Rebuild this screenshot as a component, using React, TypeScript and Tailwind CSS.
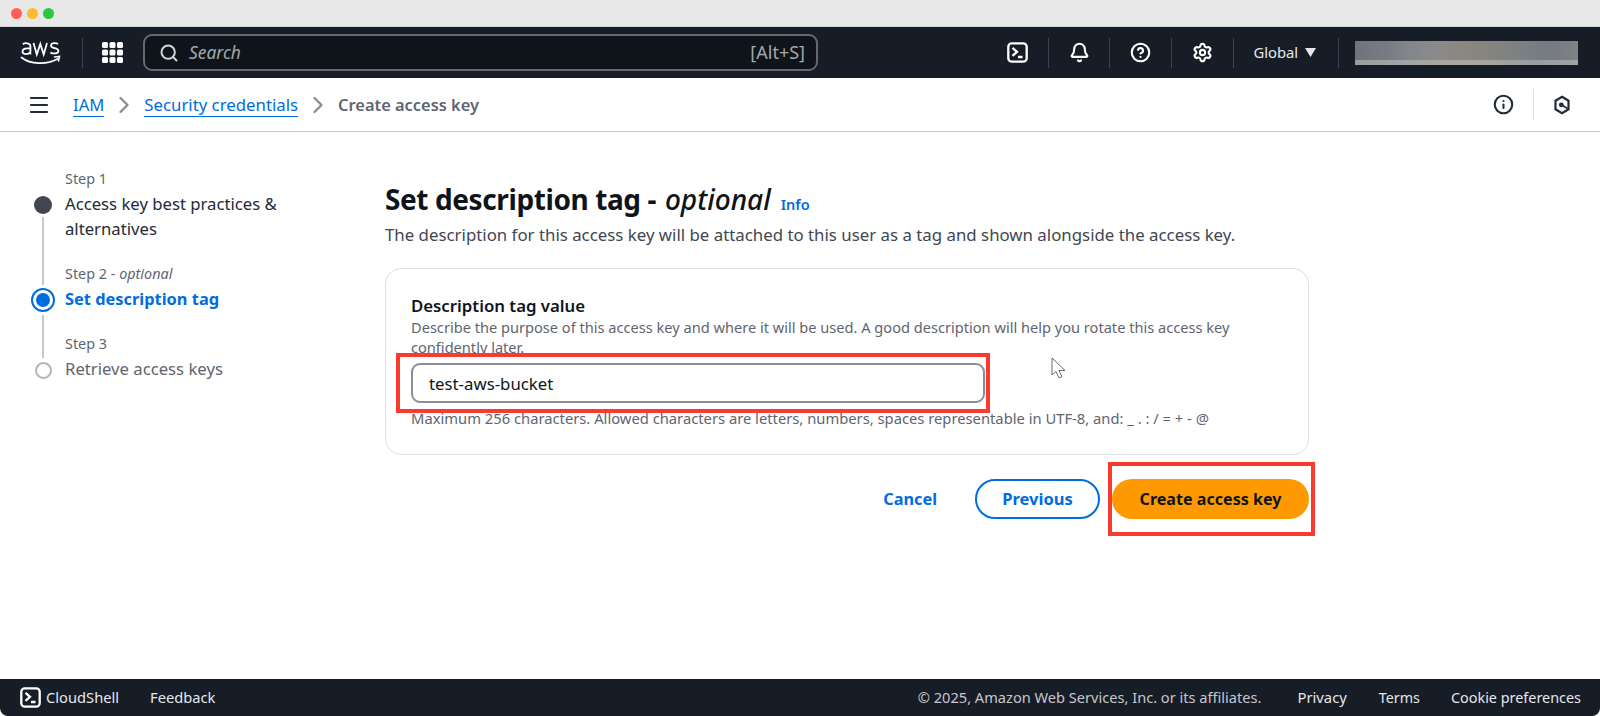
import { Bell, ChevronRight, CircleHelp, Info, Menu, Search, Settings } from 'lucide-react'

function Divider() {
  return <div className="h-[30px] w-px bg-[#3d4450]" />
}

function AwsLogo() {
  return (
    <svg width="42" height="28" viewBox="0 0 42 28" fill="none" aria-label="aws">
      <path d="M2.800 5.200c2-1.400 7.600-1.700 7.600 2v8.300M10.400 9.500c-3.500-.4-7.900 0-7.900 3.100 0 3.200 5.500 3.200 7.900.6" stroke="#fff" strokeWidth="1.800" />
      <path d="M13.500 4l3.300 11.500L20.300 5l3.400 10.500L27 4" stroke="#fff" strokeWidth="1.800" />
      <path d="M38 5c-2-1.400-7-1.500-7 1.700 0 3.200 7.400 1.500 7.400 5 0 3.300-5.500 3.300-8 1.700" stroke="#fff" strokeWidth="1.800" />
      <path d="M1.500 18.500c9 7 25 7.500 36 1.500" stroke="#fff" strokeWidth="1.800" strokeLinecap="round" />
      <path d="M34.500 18l5-.5-1 4.500" stroke="#fff" strokeWidth="1.600" strokeLinecap="round" />
    </svg>
  )
}

function AppsGrid() {
  const offsets = [0, 7.5, 15]
  return (
    <svg className="ml-[19px]" width="21" height="21" viewBox="0 0 21 21" fill="#fff" aria-hidden="true">
      {offsets.map((y) => offsets.map((x) => <rect key={`${x}-${y}`} x={x} y={y} width="6" height="6" rx="1.500" />))}
    </svg>
  )
}

function TerminalIcon() {
  return (
    <svg width="21" height="21" viewBox="0 0 21 21" fill="none" stroke="#fff" strokeWidth="2.300" aria-hidden="true">
      <rect x="1.300" y="1.300" width="18.400" height="18.400" rx="3.500" />
      <path d="M5.500 5.800l4.500 4-4.500 4M11 15h4.500" />
    </svg>
  )
}

function TopNav() {
  return (
    <header className="flex h-[51px] items-center bg-[#161d26] pl-[20px] text-white">
      <AwsLogo />
      <div className="ml-[20px] h-[30px] w-px bg-[#3d4450]" />
      <AppsGrid />
      <div className="ml-[20px] flex h-[37px] w-[675px] items-center rounded-[9px] border-2 border-[#656871] bg-[#0f141a] pl-[14px] pr-[11px]">
        <Search className="h-[20px] w-[20px] text-[#d1d5db]" strokeWidth={2.4} aria-hidden="true" />
        <span className="ml-[10px] text-[17.400px] italic text-[#a4a7ae]">Search</span>
        <span className="ml-auto text-[18px] text-[#a4a7ae]">[Alt+S]</span>
      </div>
      <div className="ml-[189px] flex items-center gap-[19.800px]">
        <TerminalIcon />
        <Divider />
        <Bell className="h-[21px] w-[21px]" strokeWidth={2.4} aria-hidden="true" />
        <Divider />
        <CircleHelp className="h-[21px] w-[21px]" strokeWidth={2.4} aria-hidden="true" />
        <Divider />
        <Settings className="h-[21px] w-[21px]" strokeWidth={2.4} aria-hidden="true" />
        <Divider />
        <span className="flex items-center gap-[7px] text-[14.800px] text-[#e5e7eb]">
          Global
          <svg width="11" height="9" viewBox="0 0 11 9" fill="#e5e7eb" aria-hidden="true">
            <path d="M0 0h11L5.500 9z" />
          </svg>
        </span>
        <div className="ml-[2px] h-[30px] w-px bg-[#3d4450]" />
      </div>
      <div className="ml-[16px] flex h-[24px] w-[223px] flex-col">
        <div className="flex-1 bg-[linear-gradient(90deg,#6f747c,#757a83,#83868a,#8b8b8a,#8b867e,#84847f,#7b8083,#757a84,#7f8385)]" />
        <div className="h-[5px] bg-[linear-gradient(90deg,#9a9ca0,#a3a4a6,#a9a79f,#a5a5a0,#999da0,#a0a3a6)]" />
      </div>
    </header>
  )
}

function Breadcrumbs() {
  return (
    <div className="flex h-[54px] items-center border-b border-[#c6c6cd] bg-white pl-[27px] pr-[28px]">
      <Menu className="h-[24px] w-[24px] text-[#232b37]" strokeWidth={2.2} aria-hidden="true" />
      <a className="ml-[22px] mt-[2px] border-b border-[#006ce0] text-[16.600px] leading-[22px] text-[#006ce0]">IAM</a>
      <ChevronRight className="mx-[6px] h-[28px] w-[28px] text-[#8c8c94]" strokeWidth={2} aria-hidden="true" />
      <a className="mt-[2px] border-b border-[#006ce0] text-[16.800px] leading-[22px] text-[#006ce0]">Security credentials</a>
      <ChevronRight className="mx-[6px] h-[28px] w-[28px] text-[#8c8c94]" strokeWidth={2} aria-hidden="true" />
      <span className="mt-[2px] text-[16.400px] font-semibold text-[#5f6570]">Create access key</span>
      <div className="ml-auto flex items-center gap-[18.500px]">
        <Info className="h-[21px] w-[21px] text-[#232b37]" strokeWidth={2.4} aria-hidden="true" />
        <div className="h-[31px] w-px bg-[#dedee3]" />
        <svg width="20" height="20" viewBox="0 0 20 20" fill="none" stroke="#232b37" strokeWidth="2.200" aria-hidden="true">
          <path d="M10 1.800l6.500 3.900v8.600L10 18.200l-6.500-3.900V5.700z" />
          <circle cx="9.300" cy="9.800" r="2.400" fill="#232b37" stroke="none" />
          <path d="M10 10.300l5.500 3.200" strokeWidth="1.800" />
        </svg>
      </div>
    </div>
  )
}

function Steps() {
  return (
    <nav className="w-[385px] shrink-0 pl-[33px] pt-[34px]">
      <div className="flex h-[95px] gap-[12px]">
        <div className="flex w-[20px] flex-col items-center pt-[30px]">
          <div className="h-[18px] w-[18px] shrink-0 rounded-full bg-[#424650]" />
          <div className="mt-[3px] h-[68px] w-[2px] shrink-0 bg-[#c6c6cd]" />
        </div>
        <div>
          <p className="text-[14.400px] leading-[25px] text-[#5f6570]">Step 1</p>
          <p className="w-[250px] text-[16.700px] leading-[25px] text-[#232b37]">Access key best practices &amp; alternatives</p>
        </div>
      </div>
      <div className="flex h-[70px] gap-[12px]">
        <div className="flex w-[20px] flex-col items-center pt-[27px]">
          <div className="flex h-[24px] w-[24px] shrink-0 items-center justify-center rounded-full border-2 border-[#006ce0]">
            <div className="h-[14px] w-[14px] rounded-full bg-[#006ce0]" />
          </div>
          <div className="mt-[3px] h-[43px] w-[2px] shrink-0 bg-[#c6c6cd]" />
        </div>
        <div>
          <p className="text-[14.400px] leading-[25px] text-[#5f6570]">
            Step 2 - <em>optional</em>
          </p>
          <p className="text-[16.400px] font-bold leading-[25px] text-[#006ce0]">Set description tag</p>
        </div>
      </div>
      <div className="flex gap-[12px]">
        <div className="flex w-[20px] flex-col items-center pt-[31px]">
          <div className="h-[17px] w-[17px] shrink-0 rounded-full border-2 border-[#b4b4bb]" />
        </div>
        <div>
          <p className="text-[14.400px] leading-[25px] text-[#5f6570]">Step 3</p>
          <p className="text-[16.700px] leading-[25px] text-[#5f6570]">Retrieve access keys</p>
        </div>
      </div>
    </nav>
  )
}

function DescriptionForm() {
  return (
    <main className="w-[924px] pt-[47px]">
      <div className="flex items-baseline">
        <h1 className="text-[28px] leading-[40px] text-[#0f141a]">
          <span className="font-bold tracking-[-0.4px]">Set description tag - </span>
          <em className="pl-[2px] font-medium">optional</em>
        </h1>
        <a className="ml-[10px] text-[14.500px] font-semibold text-[#006ce0]">Info</a>
      </div>
      <p className="mt-[4px] text-[16.840px] leading-[24px] text-[#424650]">
        The description for this access key will be attached to this user as a tag and shown alongside the access key.
      </p>
      <section className="relative mt-[21px] h-[187px] rounded-[16px] border border-[#dedee3] px-[25px] pt-[26px]">
        <label className="block text-[16.800px] font-semibold leading-[22px] text-[#0f141a]">Description tag value</label>
        <p className="w-[850px] text-[14.600px] leading-[20px] text-[#5f6570]">
          Describe the purpose of this access key and where it will be used. A good description will help you rotate this access key confidently later.
        </p>
        <input
          readOnly
          value="test-aws-bucket"
          className="mt-[6px] block h-[40px] w-[574px] rounded-[9px] border-2 border-[#8c8c94] bg-white px-[16px] text-[16.800px] text-[#0f141a] outline-none"
        />
        <p className="mt-[5px] text-[14.750px] leading-[20px] text-[#5f6570]">
          Maximum 256 characters. Allowed characters are letters, numbers, spaces representable in UTF-8, and: _ . : / = + - @
        </p>
        <div className="absolute left-[10px] top-[84px] h-[60px] w-[594px] border-4 border-[#fb3a2f]" />
        <svg className="absolute left-[665px] top-[88px]" width="17" height="24" viewBox="0 0 17 24" fill="#fff" stroke="#55585e" strokeWidth="0.900" aria-hidden="true">
          <path d="M1 1v17l4-3.500 3 6.500 3-1.500-3-6h6z" />
        </svg>
      </section>
      <div className="relative mt-[24px] flex items-center justify-end">
        <a className="mr-[38px] text-[16.300px] font-bold text-[#006ce0]">Cancel</a>
        <button className="h-[40px] w-[125px] rounded-full border-2 border-[#006ce0] text-[16.500px] font-bold text-[#006ce0]">Previous</button>
        <button className="ml-[12px] h-[40px] w-[197px] rounded-full bg-[#ff9900] text-[16.100px] font-bold text-[#0f141a]">Create access key</button>
        <div className="absolute -right-[6px] -top-[17px] h-[74px] w-[207px] border-4 border-[#fb3a2f]" />
      </div>
    </main>
  )
}

function Footer() {
  return (
    <footer className="flex h-[37px] items-center rounded-b-[8px] bg-[#161d26] pl-[20px] pr-[19px] text-[14.700px] text-[#e5e7eb]">
      <TerminalIcon />
      <span className="ml-[5px]">CloudShell</span>
      <span className="ml-[31px]">Feedback</span>
      <span className="ml-auto text-[14.600px] text-[#c6c6cd]">© 2025, Amazon Web Services, Inc. or its affiliates.</span>
      <span className="ml-[36px] text-[14.800px]">Privacy</span>
      <span className="ml-[32px] text-[14.300px]">Terms</span>
      <span className="ml-[31px] text-[14.400px]">Cookie preferences</span>
    </footer>
  )
}

export default function App() {
  return (
    <div className="flex h-[716px] flex-col bg-white font-['Noto_Sans',sans-serif]">
      <div className="flex h-[27px] shrink-0 items-center gap-[5px] border-b border-[#d1d1d1] bg-[#e8e8e8] pl-[11px]">
        <span className="h-[11px] w-[11px] rounded-full bg-[#ff5f57]" />
        <span className="h-[11px] w-[11px] rounded-full bg-[#febc2e]" />
        <span className="h-[11px] w-[11px] rounded-full bg-[#28c840]" />
      </div>
      <TopNav />
      <Breadcrumbs />
      <div className="flex flex-1">
        <Steps />
        <DescriptionForm />
      </div>
      <Footer />
    </div>
  )
}
